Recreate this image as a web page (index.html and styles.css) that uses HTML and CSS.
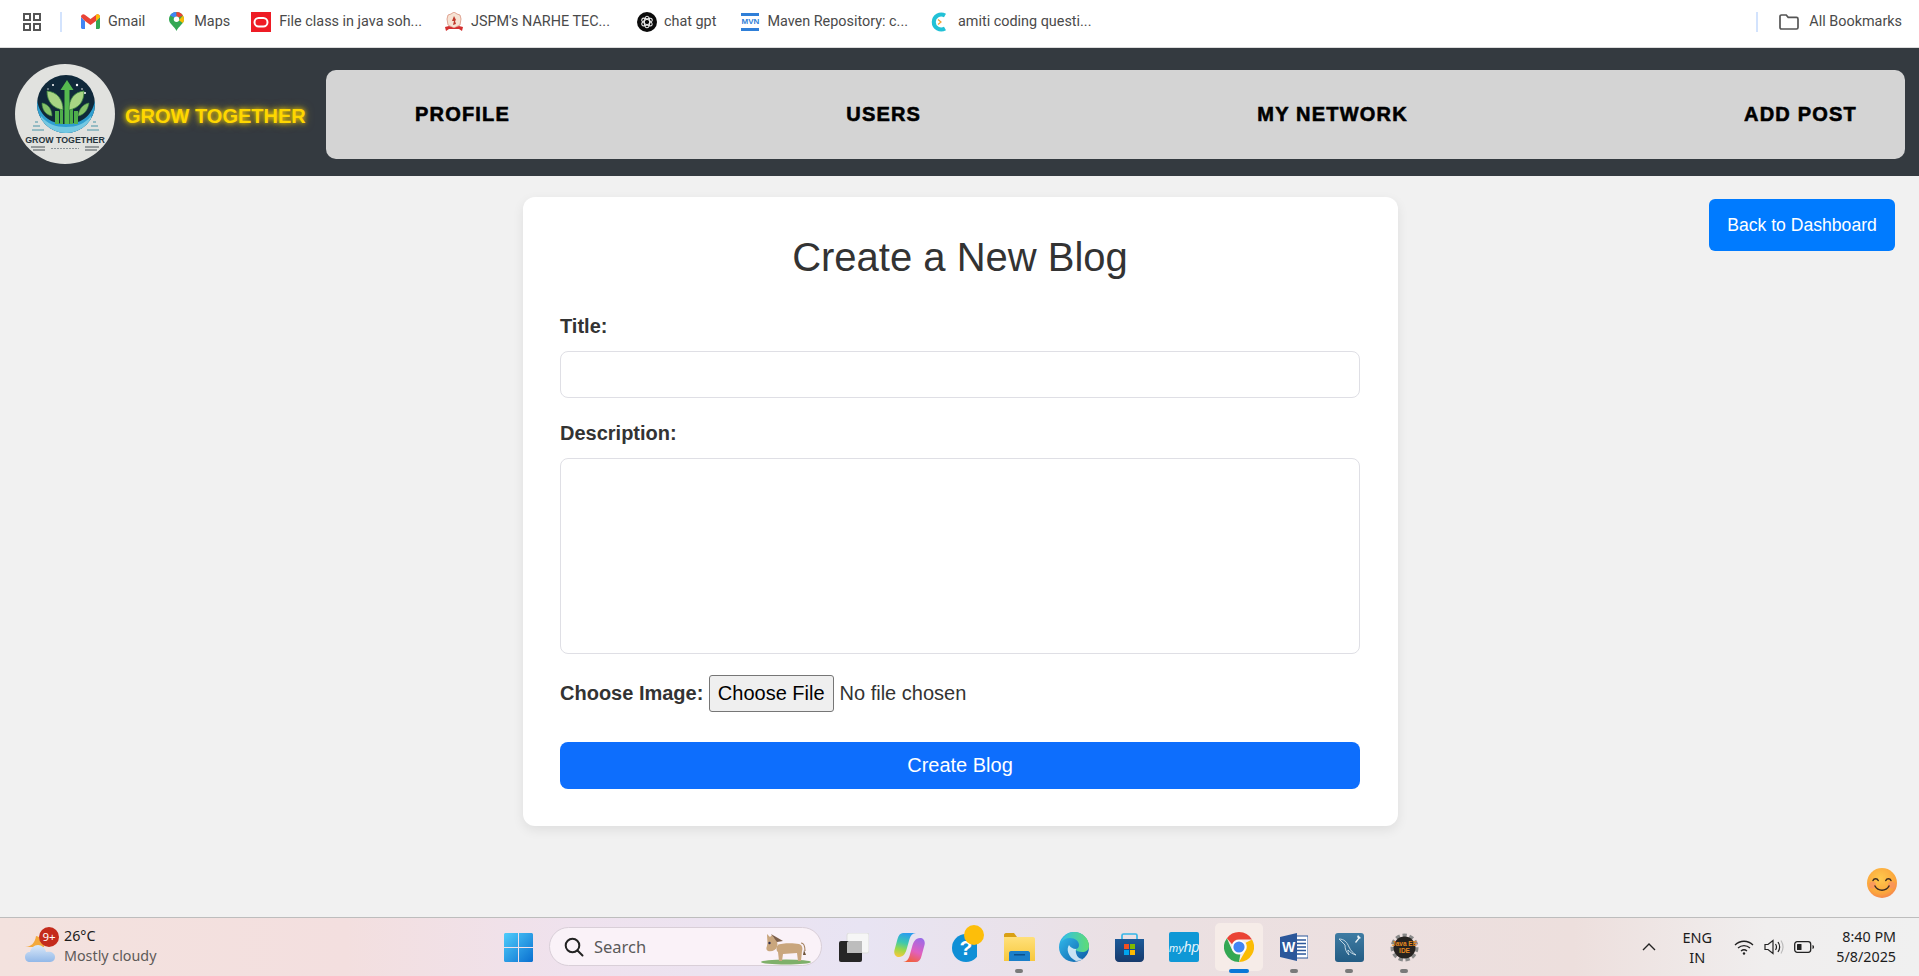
FILE: index.html

```html
<!DOCTYPE html>
<html lang="en">
<head>
    <meta charset="UTF-8">
    <meta name="viewport" content="width=device-width, initial-scale=1.0">
    <title>Create a New Blog</title>
    <link rel="stylesheet" href="styles.css">
</head>
<body>

<!-- browser bookmarks bar -->
<div class="bookmarks">
    <svg class="apps-icon" width="18" height="18" viewBox="0 0 18 18" fill="none" stroke="#555" stroke-width="2"><rect x="1" y="1" width="6" height="6"/><rect x="11" y="1" width="6" height="6"/><rect x="1" y="11" width="6" height="6"/><rect x="11" y="11" width="6" height="6"/></svg>
    <span class="bm-divider divider-left"></span>
    <a class="bm bm-gmail">
        <svg width="19" height="15" viewBox="0 0 19 15"><path d="M0 3v10.500C0 14.300.7 15 1.500 15H4V7z" fill="#4285f4"/><path d="M15 7v8h2.500c.8 0 1.500-.7 1.500-1.500V3z" fill="#34a853"/><path d="M0 3l4 4 5.500 4L15 7l4-4c0-2.500-2.200-3.500-3.800-2.300L9.500 5 3.800.7C2.200-.5 0 .5 0 3z" fill="#ea4335"/><path d="M15 1v6l4-4c0-2-1.800-3-3-2.700z" fill="#fbbc04"/></svg>
        Gmail
    </a>
    <a class="bm bm-maps">
        <svg width="15" height="19" viewBox="0 0 15 19"><path d="M7.500 0C3.400 0 0 3.200 0 7.200 0 12 5.500 14 7.500 19 9.500 14 15 12 15 7.200 15 3.200 11.600 0 7.500 0z" fill="#34a853"/><path d="M1 3.600A7.500 7.500 0 0 1 7.500 0v4.500A2.800 2.800 0 0 0 5.300 5.600z" fill="#4285f4"/><path d="M7.500 0A7.500 7.500 0 0 1 14 3.600L9.800 5.500A2.800 2.800 0 0 0 7.500 4.500z" fill="#ea4335"/><path d="M14 3.600c.7 1.100 1 2.300 1 3.600 0 1.500-.5 2.700-1.200 3.800L9.900 8.200z" fill="#fbbc04"/><circle cx="7.500" cy="7.200" r="2.700" fill="#fff"/></svg>
        Maps
    </a>
    <a class="bm bm-oracle">
        <svg width="20" height="20" viewBox="0 0 20 20"><rect width="20" height="20" fill="#ee1c25"/><rect x="3.500" y="6" width="13" height="8.500" rx="4.200" fill="none" stroke="#fff" stroke-width="2"/></svg>
        File class in java soh...
    </a>
    <a class="bm bm-jspm">
        <svg width="20" height="20" viewBox="0 0 20 20"><path d="M10 0l3 2 3 1 1 4-1 6-6 3-6-3-1-6 1-4 3-1z" fill="#f6e3d4" stroke="#d9907c" stroke-width=".8"/><path d="M10 4l2 4-1 1 1 3-3 1 1-4-2 0z" fill="#c0392b"/><path d="M1 15l4-1 5 2 5-2 4 1-1 4-3-2H5l-3 2z" fill="#d32f2f"/></svg>
        JSPM's NARHE TEC...
    </a>
    <a class="bm bm-gpt">
        <svg width="20" height="20" viewBox="0 0 20 20"><circle cx="10" cy="10" r="10" fill="#0b0b0b"/><g fill="none" stroke="#e8e8e8" stroke-width="1.100"><ellipse cx="10" cy="10" rx="2.600" ry="5.800"/><ellipse cx="10" cy="10" rx="2.600" ry="5.800" transform="rotate(60 10 10)"/><ellipse cx="10" cy="10" rx="2.600" ry="5.800" transform="rotate(120 10 10)"/></g></svg>
        chat gpt
    </a>
    <a class="bm bm-mvn">
        <span class="mvn-icon">MVN</span>
        Maven Repository: c...
    </a>
    <a class="bm bm-amiti">
        <svg width="19" height="20" viewBox="0 0 19 20"><path d="M15 3.500A7.500 7.500 0 1 0 15 16.500" fill="none" stroke="#22c1d6" stroke-width="4"/><path d="M8 7.500l3 2.500-3 2.500" fill="none" stroke="#f0a030" stroke-width="1.200"/></svg>
        amiti coding questi...
    </a>
    <span class="bm-divider divider-right"></span>
    <a class="bm bm-all">
        <svg width="20" height="16" viewBox="0 0 20 16" fill="none" stroke="#555" stroke-width="1.700"><path d="M1 13.500V2.500C1 1.600 1.600 1 2.500 1h4.700l2 2.400h8.300c.9 0 1.500.6 1.500 1.500v8.600c0 .9-.6 1.500-1.500 1.500h-15C1.600 15 1 14.400 1 13.500z"/></svg>
        All Bookmarks
    </a>
</div>

<nav class="navbar">
    <div class="logo">
        <svg width="100" height="100" viewBox="0 0 100 100">
            <defs><clipPath id="logoClip"><circle cx="51" cy="40" r="29"/></clipPath></defs>
            <circle cx="50" cy="50" r="50" fill="#e1e2df"/>
            <circle cx="51" cy="40" r="29" fill="#10293a"/>
            <g clip-path="url(#logoClip)">
                <path d="M22 36c3 18 16 24 29 24s26-6 29-24v34H22z" fill="#2f9fd0"/>
                <path d="M26 52c6 8 15 11 25 11s19-3 25-11l3 17H23z" fill="#74c8e2"/>
                <path d="M40 60V47h4v13zM45 60V42h3v18zM55 60V42h3v18zM59 60V47h4v13z" fill="#4fae4a"/>
            </g>
            <path d="M49.500 60V26h-4l6.500-10 6.500 10h-4v34z" fill="#55b94f"/>
            <path d="M32 27c10 1 16 8 16 19-10-2-16-8-16-19zM69 27c-10 1-15 8-15 19 10-2 15-8 15-19z" fill="#a8d484" stroke="#3d8c40" stroke-width=".8"/>
            <path d="M27 39c6 1 10 6 10 13-6-1-10-6-10-13zM74 39c-6 1-10 6-11 13 6-1 10-6 11-13z" fill="#86c26a" stroke="#3d8c40" stroke-width=".6"/>
            <g fill="#fff"><circle cx="38" cy="21" r="1"/><circle cx="62" cy="21" r="1.200"/><circle cx="70" cy="29" r="1"/><circle cx="67" cy="25" r=".8"/><circle cx="33" cy="25" r=".7"/></g>
            <path d="M20 58h3M18 62h7M17 66h12M78 58h3M76 62h7M72 66h12" stroke="#4b93a8" stroke-width="1.200"/>
            <text class="logo-name" x="50" y="79" text-anchor="middle">GROW TOGETHER</text>
            <path d="M16 83h14M70 83h14M18 86h12M70 86h12" stroke="#4a5358" stroke-width="1"/>
            <path d="M36 84.500h28" stroke="#8b9498" stroke-width="1.200" stroke-dasharray="2 1"/>
        </svg>
    </div>
    <span class="brand">GROW TOGETHER</span>
    <div class="nav-links">
        <a>PROFILE</a>
        <a>USERS</a>
        <a>MY NETWORK</a>
        <a>ADD POST</a>
    </div>
</nav>

<main class="content">
    <form class="blog-card">
        <h2>Create a New Blog</h2>

        <label for="title">Title:</label>
        <input type="text" id="title" name="title">

        <label for="description">Description:</label>
        <textarea id="description" name="description"></textarea>

        <div class="file-row">
            <label for="image">Choose Image:</label>
            <input type="file" id="image" name="image">
        </div>

        <button type="button" class="create-btn">Create Blog</button>
    </form>
    <a class="back-btn">Back to Dashboard</a>
</main>

<svg class="emoji" width="30" height="30" viewBox="0 0 30 30">
    <defs>
        <radialGradient id="emojiFace" cx="45%" cy="35%" r="70%"><stop offset="0" stop-color="#ffc94d"/><stop offset=".7" stop-color="#fba63c"/><stop offset="1" stop-color="#f47f50"/></radialGradient>
    </defs>
    <circle cx="15" cy="15" r="15" fill="url(#emojiFace)"/>
    <circle cx="5.500" cy="17" r="3.500" fill="#f98a6a" opacity=".6"/>
    <circle cx="24.500" cy="17" r="3.500" fill="#f98a6a" opacity=".6"/>
    <path d="M6 12.500c1-2.400 4.200-2.400 5.200 0M18.800 12.500c1-2.400 4.200-2.400 5.200 0M8 18c3 5.500 11 5.500 14 0" fill="none" stroke="#3a2a20" stroke-width="1.500" stroke-linecap="round"/>
</svg>

<!-- windows taskbar -->
<footer class="taskbar">
    <div class="weather">
        <div class="weather-icon">
            <svg width="30" height="30" viewBox="0 0 30 30">
                <defs><linearGradient id="cloud" x1="0" y1="0" x2="0" y2="1"><stop offset="0" stop-color="#dbe9f9"/><stop offset="1" stop-color="#92b8e8"/></linearGradient></defs>
                <path d="M0 15c6 0 10-4 11-11 5 1 9 6 8 11z" fill="#f3a93c"/>
                <path d="M5 30C2 30 0 28 0 25s2-5 5-5c1-4 4-7 8-7s7 3 8 7c5-1 9 1 9 5s-3 5-6 5z" fill="url(#cloud)"/>
            </svg>
            <span class="badge">9+</span>
        </div>
        <div class="weather-text">
            <span class="temp">26°C</span>
            <span class="cond">Mostly cloudy</span>
        </div>
    </div>

    <div class="task-center">
        <div class="task-item">
            <svg width="29" height="29" viewBox="0 0 29 29">
                <defs><linearGradient id="win" x1="0" y1="0" x2="1" y2="1"><stop offset="0" stop-color="#4fcdfb"/><stop offset="1" stop-color="#0a6fd0"/></linearGradient></defs>
                <path d="M0 1.500C0 .7.700 0 1.500 0H14v14H0zM15 0h12.500c.8 0 1.500.7 1.500 1.500V14H15zM0 15h14v14H1.500C.7 29 0 28.300 0 27.500zM15 15h14v12.500c0 .8-.7 1.500-1.500 1.500H15z" fill="url(#win)"/>
            </svg>
        </div>

        <div class="search-box">
            <svg width="20" height="20" viewBox="0 0 20 20" fill="none" stroke="#222" stroke-width="2"><circle cx="8.500" cy="8.500" r="6.800"/><path d="M13.500 13.500L18.500 18.500" stroke-linecap="round"/></svg>
            <span>Search</span>
            <svg class="donkey" width="50" height="34" viewBox="0 0 50 34">
                <ellipse cx="25" cy="31" rx="25" ry="2.500" fill="#7fb06a"/>
                <path d="M16 14c5-2 16-2 22-1 3 1 4 4 3 7l-1 10h-3l-1-8-14 1-1 7h-3l-1-9c-2-1-2-5 0-7z" fill="#c9a67d"/>
                <path d="M6 3l3 3 2-2 2 3c3 1 4 5 3 9-1 3-5 5-9 4-2-1-2-3-1-5 1-3 0-7 0-12z" fill="#c9a67d"/>
                <path d="M10 3l12 7-6 1z" fill="#7c5f4a"/>
                <circle cx="8.500" cy="12" r="1.200" fill="#2f2f4f"/>
                <path d="M40 12c3 0 4 3 4 8" fill="none" stroke="#a4825f" stroke-width="1.200"/>
                <path d="M43 19l2 5h-3z" fill="#6d5238"/>
            </svg>
        </div>

        <div class="task-item">
            <svg width="30" height="29" viewBox="0 0 30 29">
                <rect x="8" y="0" width="22" height="20" rx="2" fill="#f6f6f6" stroke="#ddd"/>
                <rect x="0" y="8" width="23" height="21" rx="2" fill="#262626"/>
                <path d="M8 10c0-1 .6-2 2-2h13v12H8z" fill="#bdbdbd"/>
            </svg>
        </div>
        <div class="task-item">
            <svg width="31" height="29" viewBox="0 0 31 29">
                <defs>
                    <linearGradient id="copA" gradientUnits="userSpaceOnUse" x1="12" y1="0" x2="6" y2="24"><stop offset="0" stop-color="#2a9df0"/><stop offset=".4" stop-color="#3cc8b0"/><stop offset=".7" stop-color="#9ad84a"/><stop offset="1" stop-color="#f5c83c"/></linearGradient>
                    <linearGradient id="copB" gradientUnits="userSpaceOnUse" x1="26" y1="5" x2="16" y2="29"><stop offset="0" stop-color="#9a6be8"/><stop offset=".55" stop-color="#e060c0"/><stop offset="1" stop-color="#f2603a"/></linearGradient>
                </defs>
                <path d="M9 0h13c-3.500 .4-5.500 2.500-6.500 6L13 15c-1.200 5-3.500 9-8 9-3.500 0-5.500-3-4.500-7L3.500 6C4.500 2 6.500 0 9 0z" fill="url(#copA)"/>
                <path d="M22 29H9c3.500-.4 5.500-2.500 6.500-6L18 14c1.200-5 3.500-9 8-9 3.500 0 5.500 3 4.500 7l-3 11c-1 4-3 6-5.500 6z" fill="url(#copB)"/>
            </svg>
        </div>
        <div class="task-item help-item">
            <svg width="26" height="29" viewBox="0 0 26 29"><circle cx="15" cy="15" r="14" fill="#0f8fd6"/><text class="help-mark" x="15" y="22" text-anchor="middle">?</text></svg>
            <span class="help-dot"></span>
        </div>
        <div class="task-item running">
            <svg width="31" height="28" viewBox="0 0 31 28">
                <defs><linearGradient id="folder" x1="0" y1="0" x2="0" y2="1"><stop offset="0" stop-color="#ffe07a"/><stop offset="1" stop-color="#f8c83c"/></linearGradient></defs>
                <path d="M0 2c0-1 .7-2 2-2h8l3 4h-13z" fill="#d9a014"/>
                <path d="M0 4h29c1 0 2 .7 2 2v22H0z" fill="url(#folder)"/>
                <path d="M5 28v-8c0-1 .7-2 2-2h17c1 0 2 1 2 2v8z" fill="#1b7fc9"/>
                <rect x="10" y="21" width="11" height="1.500" fill="#0b4f8a"/>
            </svg>
        </div>
        <div class="task-item">
            <svg width="30" height="30" viewBox="0 0 30 30">
                <defs>
                    <linearGradient id="edgeA" x1="0" y1="0" x2="1" y2="1"><stop offset="0" stop-color="#35c1f1"/><stop offset="1" stop-color="#0c59a4"/></linearGradient>
                    <linearGradient id="edgeB" x1="0" y1="0" x2="1" y2="0"><stop offset="0" stop-color="#33bfe8"/><stop offset="1" stop-color="#5fdc74"/></linearGradient>
                </defs>
                <circle cx="15" cy="15" r="15" fill="url(#edgeA)"/>
                <path d="M2 10C5 3 10 0 15 0c9 0 15 7 15 14 0 4-3 6-7 6-3 0-6-1-7-3 2 0 4-1 4-4 0-4-4-7-9-7-4 0-7 2-9 4z" fill="url(#edgeB)"/>
                <path d="M17 17c-3 0-6-2-7-4-3 4-1 12 7 16 3 0 5-1 7-2-5 0-8-5-7-10z" fill="#e8f4fb" opacity=".85"/>
            </svg>
        </div>
        <div class="task-item">
            <svg width="29" height="29" viewBox="0 0 29 29">
                <defs><linearGradient id="store" x1="0" y1="0" x2="0" y2="1"><stop offset="0" stop-color="#1c5a99"/><stop offset="1" stop-color="#173a6c"/></linearGradient></defs>
                <path d="M7 6V2.500C7 1.500 7.700 1 8.500 1h12c.8 0 1.500.5 1.500 1.500V6" fill="none" stroke="#35b5e8" stroke-width="1.700"/>
                <path d="M0 6h29v19c0 2-1.500 4-4 4H4c-2.500 0-4-2-4-4z" fill="url(#store)"/>
                <rect x="9" y="11" width="5" height="5" fill="#f25022"/><rect x="15" y="11" width="5" height="5" fill="#7fba00"/><rect x="9" y="17" width="5" height="5" fill="#00a4ef"/><rect x="15" y="17" width="5" height="5" fill="#ffb900"/>
            </svg>
        </div>
        <div class="task-item">
            <span class="myhp">my<b>hp</b></span>
        </div>
        <div class="task-item running active">
            <svg width="30" height="30" viewBox="0 0 30 30">
                <path d="M15 0a15 15 0 0 1 13 7.500H15a7.500 7.500 0 0 0-7 4.800L2.900 6.200A15 15 0 0 1 15 0z" fill="#ea4335"/>
                <path d="M28 7.500A15 15 0 0 1 15 30l6.500-11.200a7.500 7.500 0 0 0 .2-8z" fill="#fbbc04"/>
                <path d="M15 30A15 15 0 0 1 2.900 6.200L8.300 18.500a7.500 7.500 0 0 0 8 3.900z" fill="#34a853"/>
                <circle cx="15" cy="15" r="7" fill="#fff"/><circle cx="15" cy="15" r="5.600" fill="#4285f4"/>
            </svg>
        </div>
        <div class="task-item running">
            <svg width="28" height="28" viewBox="0 0 28 28">
                <rect x="13" y="3" width="15" height="22" fill="#fff" stroke="#2b579a"/>
                <path d="M16 7h10M16 10.500h10M16 14h10M16 17.500h10M16 21h10" stroke="#2b579a" stroke-width="1.300"/>
                <path d="M0 4l17-4v28L0 24z" fill="#2b579a"/>
                <text class="word-mark" x="8.500" y="18.500" text-anchor="middle">W</text>
            </svg>
        </div>
        <div class="task-item running">
            <svg width="29" height="29" viewBox="0 0 29 29">
                <defs><linearGradient id="mysql" x1="0" y1="0" x2="0" y2="1"><stop offset="0" stop-color="#3f7ca3"/><stop offset="1" stop-color="#235c84"/></linearGradient></defs>
                <rect width="29" height="29" rx="3" fill="url(#mysql)"/>
                <path d="M4 6c5 0 8 3 10 8 2 4 4 6 7 8-4-1-6-3-8-5 0 2 0 3 1 5-3-3-4-6-4-10-2-2-4-4-6-6z" fill="none" stroke="#cfe0ea" stroke-width=".9"/>
                <path d="M20 9l4-5 1 1-4 5zM23 2l3 3-2 1-2-2z" fill="#eaf2f6"/>
            </svg>
        </div>
        <div class="task-item running">
            <svg width="29" height="29" viewBox="0 0 29 29">
                <circle cx="14.500" cy="14.500" r="11.500" fill="none" stroke="#8a8a8a" stroke-width="5" stroke-dasharray="4 2.500"/>
                <circle cx="14.500" cy="14.500" r="11" fill="#26221f"/>
                <text class="ee-mark" x="14.500" y="12.500" text-anchor="middle">Java EE</text>
                <text class="ee-mark" x="14.500" y="20" text-anchor="middle">IDE</text>
            </svg>
        </div>
    </div>

    <div class="tray">
        <svg class="chevron" width="14" height="8" viewBox="0 0 14 8" fill="none" stroke="#222" stroke-width="1.400"><path d="M1 7l6-6 6 6"/></svg>
        <div class="lang"><span>ENG</span><span>IN</span></div>
        <svg class="wifi" width="20" height="16" viewBox="0 0 20 16" fill="none" stroke="#222" stroke-width="1.300"><path d="M1 6c5-5 13-5 18 0M4 9c3.500-3.300 8.500-3.300 12 0M7 12c1.800-1.500 4.200-1.500 6 0"/><circle cx="10" cy="14.500" r="1.200" fill="#222" stroke="none"/></svg>
        <svg class="speaker" width="20" height="16" viewBox="0 0 20 16" fill="none" stroke="#222" stroke-width="1.200"><path d="M1 5.500h3L9 1.500v13l-5-4H1z"/><path d="M11.500 5c1.200 1.800 1.200 4.200 0 6M14 3c2 3 2 7 0 10"/><path d="M17 1.500c2.500 4 2.500 9 0 13" stroke="#bbb"/></svg>
        <svg class="battery" width="20" height="12" viewBox="0 0 20 12" fill="none"><rect x=".7" y=".7" width="16" height="10.600" rx="2.500" stroke="#222" stroke-width="1.300"/><rect x="3" y="3" width="4.500" height="6" rx=".5" fill="#222"/><path d="M18.500 4v4c1-.3 1.500-1 1.500-2s-.5-1.700-1.500-2z" fill="#222"/></svg>
        <div class="clock"><span>8:40 PM</span><span>5/8/2025</span></div>
    </div>
</footer>

</body>
</html>
```

FILE: styles.css

```css
* {
    box-sizing: border-box;
}
body {
    margin: 0;
    height: 100vh;
    overflow: hidden;
    display: flex;
    flex-direction: column;
    font-family: "Liberation Sans", Arial, sans-serif;
    background-color: #f1f1f1;
}

/* bookmarks bar */
.bookmarks {
    height: 48px;
    flex: none;
    display: flex;
    align-items: center;
    padding-bottom: 4px;
    background-color: #fff;
    border-bottom: 1px solid #dcdcdc;
    font-family: Roboto, sans-serif;
    font-size: 14.4px;
    color: #4a4a4a;
}
.bm {
    display: flex;
    align-items: center;
    gap: 8px;
    white-space: nowrap;
}
.apps-icon {
    margin-left: 23px;
}
.bm-divider {
    width: 2px;
    height: 20px;
    background-color: #d3e3fd;
}
.divider-left {
    margin-left: 19px;
}
.bm-gmail {
    margin-left: 19px;
}
.bm-maps {
    margin-left: 24px;
    gap: 10px;
}
.bm-oracle {
    margin-left: 21px;
}
.bm-jspm {
    margin-left: 22px;
    gap: 7px;
}
.bm-gpt {
    margin-left: 27px;
    gap: 7px;
}
.bm-mvn {
    margin-left: 25px;
    gap: 8px;
}
.bm-amiti {
    margin-left: 22px;
    gap: 9px;
}
.divider-right {
    margin-left: auto;
}
.bm-all {
    margin-left: 21px;
    margin-right: 17px;
    gap: 10px;
}
.mvn-icon {
    width: 18px;
    height: 18px;
    border-top: 3px solid #2f7fd8;
    border-bottom: 3px solid #2f7fd8;
    color: #2f7fd8;
    font-family: "Liberation Sans", sans-serif;
    font-size: 8px;
    font-weight: bold;
    line-height: 12px;
    text-align: center;
}

/* navbar */
.navbar {
    height: 128px;
    flex: none;
    display: flex;
    align-items: center;
    padding: 4px 14px 0 15px;
    background-color: #343a40;
}
.logo {
    width: 100px;
    height: 100px;
    flex: none;
}
.logo svg {
    display: block;
}
.logo-name {
    font-family: "Liberation Sans", sans-serif;
    font-size: 8.800px;
    font-weight: bold;
    fill: #26343c;
}
.brand {
    margin-left: 10px;
    width: 201px;
    flex: none;
    padding-top: 4px;
    color: #ffd700;
    font-size: 20px;
    font-weight: bold;
    white-space: nowrap;
    text-shadow: 0 0 5px #ffd700, 0 0 10px rgba(255, 215, 0, 0.5);
}
.nav-links {
    flex: 1;
    height: 89px;
    display: flex;
    align-items: center;
    justify-content: space-between;
    padding: 1px 48px 0 89px;
    background-color: #d4d4d4;
    border-radius: 10px;
}
.nav-links a {
    color: #000;
    font-size: 20px;
    font-weight: bold;
    letter-spacing: 1.200px;
    -webkit-text-stroke: 0.6px #000;
}

/* main content */
.content {
    flex: 1;
    display: grid;
    grid-template-columns: 1fr 875px 1fr;
    align-items: start;
    padding: 21px 0 0 2px;
}
.blog-card {
    grid-column: 2;
    padding: 38px 38px 37px 37px;
    background-color: #fff;
    border-radius: 12px;
    box-shadow: 0 4px 12px rgba(0, 0, 0, 0.08);
    color: #333;
}
.blog-card h2 {
    margin: 0 0 35px;
    font-size: 40px;
    font-weight: normal;
    text-align: center;
}
.blog-card label {
    display: block;
    margin-bottom: 13px;
    font-size: 20px;
    font-weight: bold;
}
.blog-card input[type="text"],
.blog-card textarea {
    display: block;
    width: 100%;
    border: 1px solid #dfdfe5;
    border-radius: 8px;
    background-color: #fff;
}
.blog-card input[type="text"] {
    height: 47px;
    margin-bottom: 24px;
}
.blog-card textarea {
    height: 196px;
    margin-bottom: 21px;
    resize: none;
}
.file-row {
    margin-bottom: 30px;
    height: 37px;
}
.file-row label {
    display: inline;
    margin: 0;
}
.file-row input {
    margin-left: 1px;
    font-family: "Liberation Sans", sans-serif;
    font-size: 20px;
    color: #333;
}
.file-row input::file-selector-button {
    height: 37px;
    margin-right: 6px;
    padding: 0 8px;
    font-family: "Liberation Sans", sans-serif;
    font-size: 20px;
    color: #000;
    background-color: #efefef;
    border: 1px solid #767676;
    border-radius: 3px;
}
.create-btn {
    display: block;
    width: 100%;
    height: 47px;
    border: none;
    border-radius: 8px;
    background-color: #0d6efd;
    color: #fff;
    font-family: "Liberation Sans", sans-serif;
    font-size: 20px;
}
.back-btn {
    grid-column: 3;
    justify-self: end;
    width: 186px;
    height: 52px;
    margin: 2px 24px 0 0;
    display: flex;
    align-items: center;
    justify-content: center;
    background-color: #007bff;
    border-radius: 6px;
    color: #fff;
    font-size: 17.600px;
}
.emoji {
    position: fixed;
    left: 1867px;
    top: 868px;
}

/* taskbar */
.taskbar {
    height: 59px;
    flex: none;
    display: flex;
    align-items: center;
    border-top: 1px solid #bdbdbd;
    background: linear-gradient(90deg, #f3e2de 0, #f3dfdf 18%, #efe2ee 30%, #e8e4f3 45%, #ebe0e2 60%, #eddfdd 82%, #f0eeee 92%, #f0f0f0 100%);
    font-family: "Noto Sans", sans-serif;
    color: #1c1c1c;
}
.weather {
    width: 494px;
    flex: none;
    display: flex;
    align-items: center;
    padding-left: 25px;
    gap: 9px;
}
.weather-icon {
    position: relative;
    width: 30px;
    height: 30px;
}
.badge {
    position: absolute;
    left: 14px;
    top: -5px;
    width: 20px;
    height: 20px;
    border-radius: 50%;
    background-color: #c42b1c;
    color: #fff;
    font-size: 11.500px;
    line-height: 20px;
    text-align: center;
}
.weather-text {
    display: flex;
    flex-direction: column;
    margin-top: -2px;
    font-size: 14.300px;
    line-height: 20px;
}
.cond {
    color: #5d5a58;
}
.task-center {
    display: flex;
    align-items: center;
    gap: 7px;
}
.task-item {
    position: relative;
    width: 48px;
    height: 48px;
    display: flex;
    align-items: center;
    justify-content: center;
}
.running::after {
    content: "";
    position: absolute;
    left: 20px;
    bottom: -2px;
    width: 8px;
    height: 4px;
    border-radius: 2px;
    background-color: #7a7a7a;
}
.active {
    background-color: #f6ece8;
    border-radius: 5px;
}
.active::after {
    left: 14px;
    width: 20px;
    background-color: #0a78d7;
}
.help-mark {
    font-family: "Liberation Sans", sans-serif;
    font-size: 21px;
    font-weight: bold;
    fill: #fff;
}
.help-dot {
    position: absolute;
    left: 24px;
    top: 2px;
    width: 20px;
    height: 20px;
    border-radius: 50%;
    background-color: #fdbe0a;
}
.myhp {
    width: 30px;
    height: 30px;
    background-color: #0f98d6;
    border-radius: 2px;
    color: #e8f6fc;
    font-family: "Liberation Sans", sans-serif;
    font-size: 11px;
    font-style: italic;
    line-height: 30px;
    text-align: center;
}
.myhp b {
    font-size: 14px;
    font-weight: normal;
}
.word-mark {
    font-family: "Liberation Sans", sans-serif;
    font-size: 14px;
    font-weight: bold;
    fill: #fff;
}
.ee-mark {
    font-family: "Liberation Sans", sans-serif;
    font-size: 6.500px;
    font-weight: bold;
    fill: #e58a1f;
}
.search-box {
    width: 273px;
    height: 39px;
    margin: -1px 1px 0 0;
    display: flex;
    align-items: center;
    padding-left: 14px;
    gap: 10px;
    background-color: #faf2f8;
    border: 1px solid #d9cfd8;
    border-radius: 20px;
    font-size: 16.500px;
    color: #5a5a5a;
}
.donkey {
    margin-left: auto;
    margin-right: 10px;
    margin-top: 3px;
}
.tray {
    margin-left: auto;
    display: flex;
    align-items: center;
    padding-right: 23px;
    font-size: 14.500px;
}
.lang {
    width: 44px;
    margin-left: 19px;
    display: flex;
    flex-direction: column;
    align-items: center;
    line-height: 20px;
}
.wifi {
    margin-left: 15px;
}
.speaker {
    margin-left: 10px;
}
.battery {
    margin-left: 10px;
}
.clock {
    margin-left: 22px;
    display: flex;
    flex-direction: column;
    align-items: flex-end;
    line-height: 20px;
    font-size: 14.300px;
}
```
